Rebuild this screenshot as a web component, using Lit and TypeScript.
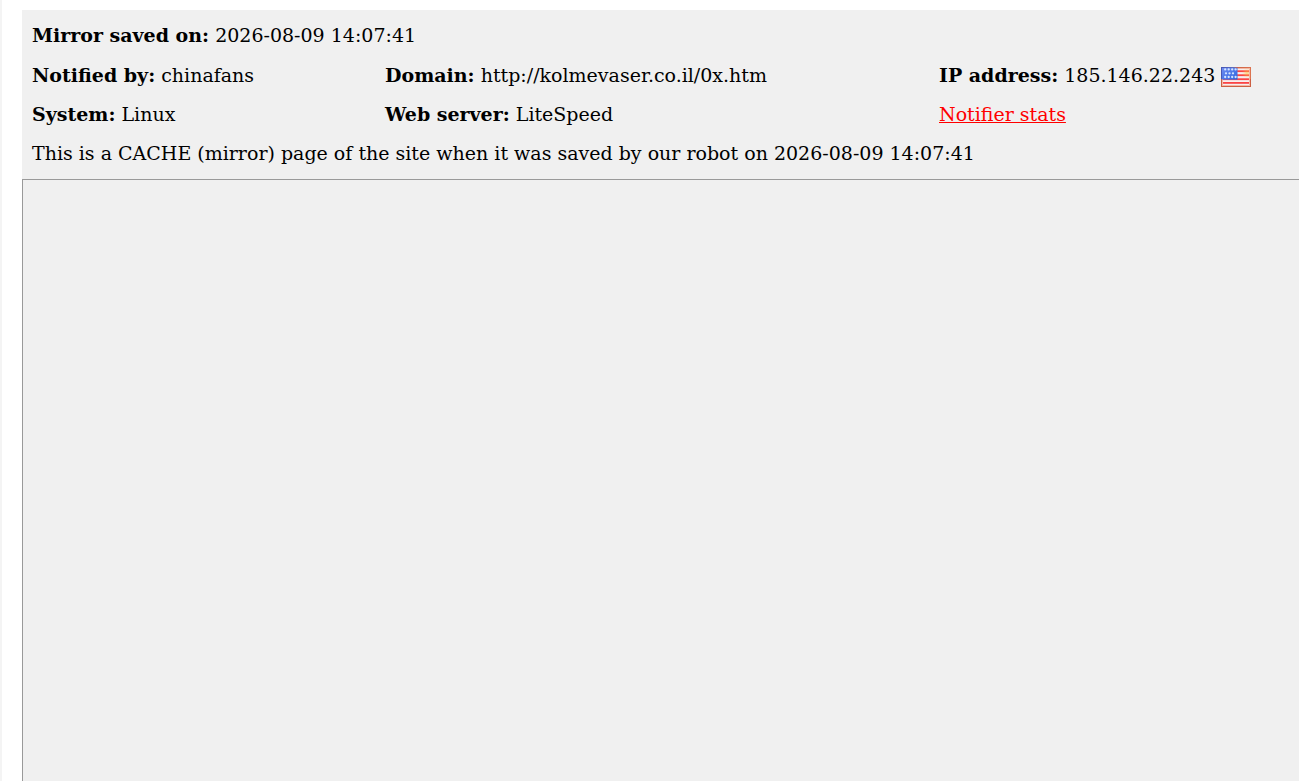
import { LitElement, html, css, svg } from "lit";
import { customElement } from "lit/decorators.js";

@customElement("us-flag")
class UsFlag extends LitElement {
  static styles = css`
    :host { display: inline-block; width: 30px; height: 20px; vertical-align: -5px; line-height: 0; }
    svg { display: block; width: 100%; height: 100%; }
  `;

  render() {
    return html`
      <svg viewBox="0 0 30 20" role="img" aria-label="United States">
        <defs>
          <linearGradient id="edge" x1="0" y1="0" x2="1" y2="0">
            <stop offset="0" stop-color="#4656b4" />
            <stop offset=".4" stop-color="#5a6cc0" />
            <stop offset=".58" stop-color="#cf6446" />
            <stop offset="1" stop-color="#dc7450" />
          </linearGradient>
          <linearGradient id="canton" x1="0" y1="0" x2="1" y2="1">
            <stop offset="0" stop-color="#6f8cf0" />
            <stop offset="1" stop-color="#2c66e0" />
          </linearGradient>
          <radialGradient id="shine" cx="26" cy="6" r="5" gradientUnits="userSpaceOnUse">
            <stop offset="0" stop-color="#ffc640" stop-opacity=".6" />
            <stop offset="1" stop-color="#ffc640" stop-opacity="0" />
          </radialGradient>
        </defs>
        <rect width="30" height="20" fill="#cc5f42" />
        <rect width="30" height="12" fill="url(#edge)" />
        <rect x="1" y="1" width="28" height="18" fill="#f3b8a4" />
        <rect x="2" y="2" width="26" height="16" fill="#f7eeee" />
        ${[3.3, 7.3, 11.3, 15].map((y) => svg`<rect x="2" y=${y} width="26" height="1.8" fill="#fb4444" />`)}
        <rect x="1" y="1" width="15.5" height="11.6" fill="url(#canton)" />
        ${[2.4, 6.3, 10].map((y, row) =>
          (row === 1 ? [5, 8.5, 12] : [4.2, 7.7, 11.2, 14.6]).map(
            (x) => svg`<circle cx=${x} cy=${y} r="1.15" fill="#d4e4ff" />`
          )
        )}
        <rect x="2" y="2" width="26" height="16" fill="url(#shine)" />
      </svg>
    `;
  }
}

@customElement("app-root")
class AppRoot extends LitElement {
  static styles = css`
    :host {
      display: block;
      box-sizing: border-box;
      min-height: 100vh;
      background: #fff;
      color: #000;
      font: 19px/39px "DejaVu Serif", serif;
    }
    .page {
      display: flex;
      flex-direction: column;
      box-sizing: border-box;
      min-height: 100vh;
      padding: 10px 0 0 20px;
      border-left: 2px solid #f4f4f4;
    }
    .info { padding: 6px 10px; background: #f0f0f0; }
    .details {
      display: grid;
      grid-template-columns: 353fr 554fr 350fr;
      padding-top: 1px;
    }
    p { margin: 0; }
    .stats { color: #f00; text-decoration: underline; }
    .mirror {
      flex: 1;
      background: #f0f0f0;
      border: solid #999;
      border-width: 1px 0 0 1px;
    }
  `;

  render() {
    return html`
      <main class="page">
        <header class="info">
          <p><strong>Mirror saved on:</strong> 2026-08-09 14:07:41</p>
          <div class="details">
            <p><strong>Notified by:</strong> chinafans</p>
            <p><strong>Domain:</strong> http://kolmevaser.co.il/0x.htm</p>
            <p><strong>IP address:</strong> 185.146.22.243 <us-flag></us-flag></p>
            <p><strong>System:</strong> Linux</p>
            <p><strong>Web server:</strong> LiteSpeed</p>
            <p><a class="stats" href="#">Notifier stats</a></p>
          </div>
          <p>This is a CACHE (mirror) page of the site when it was saved by our robot on 2026-08-09 14:07:41</p>
        </header>
        <section class="mirror" aria-label="Saved page"></section>
      </main>
    `;
  }
}
